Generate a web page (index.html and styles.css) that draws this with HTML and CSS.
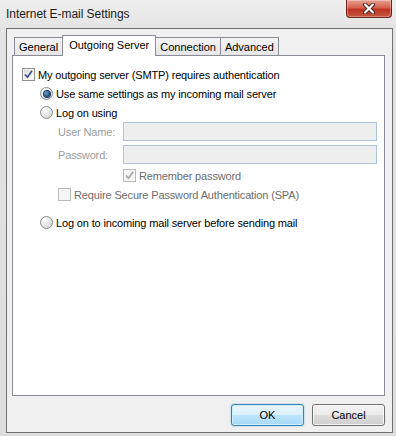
FILE: index.html
```html
<!DOCTYPE html>
<html>
<head>
  <title>Internet E-mail Settings</title>
  <link rel="stylesheet" href="styles.css">
</head>
<body>
  <div class="window">
    <div class="titlebar">
      <span class="title">Internet E-mail Settings</span>
      <div class="close">
        <svg width="16" height="11" viewBox="0 0 16 11">
          <path d="M4 1.5 L12 9.5 M12 1.5 L4 9.5" stroke="#4a2420" stroke-width="4" stroke-linecap="round"/>
          <path d="M4 1.5 L12 9.5 M12 1.5 L4 9.5" stroke="#ffffff" stroke-width="2.2" stroke-linecap="round"/>
        </svg>
      </div>
    </div>

    <div class="client">
      <div class="tabs">
        <div class="tab">General</div>
        <div class="tab active">Outgoing Server</div>
        <div class="tab">Connection</div>
        <div class="tab">Advanced</div>
      </div>

      <div class="panel">
        <div class="row">
          <span class="check">
            <svg width="9" height="9" viewBox="0 0 9 9"><path d="M1 4.5 L3.5 7.2 L8 0.8" fill="none" stroke="#3b4f8a" stroke-width="1.7"/></svg>
          </span>
          My outgoing server (SMTP) requires authentication
        </div>
        <div class="row level1">
          <span class="radio on"></span>
          Use same settings as my incoming mail server
        </div>
        <div class="row level1">
          <span class="radio"></span>
          Log on using
        </div>
        <div class="row level2 field">
          <span class="field-label">User Name:</span>
          <span class="text-input"></span>
        </div>
        <div class="row level2 field second">
          <span class="field-label">Password:</span>
          <span class="text-input"></span>
        </div>
        <div class="row level3 remember disabled">
          <span class="check off">
            <svg width="9" height="9" viewBox="0 0 9 9"><path d="M1 4.5 L3.5 7.2 L8 0.8" fill="none" stroke="#a3a3a3" stroke-width="1.5"/></svg>
          </span>
          Remember password
        </div>
        <div class="row level2 disabled">
          <span class="check off"></span>
          Require Secure Password Authentication (SPA)
        </div>
        <div class="row level1 last">
          <span class="radio"></span>
          Log on to incoming mail server before sending mail
        </div>
      </div>

      <div class="buttons">
        <button class="btn default">OK</button>
        <button class="btn">Cancel</button>
      </div>
    </div>
  </div>
</body>
</html>
```

FILE: styles.css
```css
body {
  margin: 0;
  font-family: "Liberation Sans", Arial, sans-serif;
  font-size: 11px;
  color: #000;
}
.window {
  width: 396px;
  height: 436px;
  overflow: hidden;
  background: linear-gradient(to bottom, #efefef 0, #e4e4e4 28px, #dddddd 100%);
}
.titlebar {
  height: 28px;
  display: flex;
  justify-content: space-between;
  align-items: flex-start;
  padding: 0 4px 0 6px;
}
.title {
  font-size: 12px;
  line-height: 29px;
  letter-spacing: -0.05px;
  color: #1a1a1a;
}
.close {
  width: 46px;
  height: 18px;
  box-sizing: border-box;
  border: 1px solid #6b211a;
  border-top: none;
  border-radius: 0 0 4px 4px;
  background: linear-gradient(#e9a293 0, #d5604b 45%, #bd3522 55%, #c8563f 100%);
  box-shadow: inset 0 0 0 1px rgba(255, 255, 255, 0.3);
  display: flex;
  align-items: center;
  justify-content: center;
}
.client {
  margin-left: 6px;
  width: 387px;
  height: 405px;
  box-sizing: border-box;
  border: 1px solid #707070;
  background: #f0f0f0;
  padding: 6px 7px 0 5px;
}
.tabs {
  display: flex;
  align-items: flex-end;
  height: 20px;
  margin-left: 2px;
  position: relative;
  z-index: 1;
}
.tab {
  height: 18px;
  box-sizing: border-box;
  border: 1px solid #898c95;
  border-bottom: none;
  margin-left: -1px;
  padding: 0 4px;
  line-height: 19px;
  background: linear-gradient(#f4f4f4, #e6e6e6);
}
.tab:first-child {
  margin-left: 0;
}
.tab.active {
  height: 21px;
  margin-bottom: -1px;
  padding: 0 6px;
  line-height: 19px;
  background: #fff;
}
.panel {
  width: 373px;
  height: 341px;
  box-sizing: border-box;
  border: 1px solid #898c95;
  background: #fff;
  padding: 9px 0 0 9px;
  letter-spacing: -0.15px;
}
.row {
  display: flex;
  align-items: center;
  height: 19px;
  white-space: nowrap;
}
.level1 {
  padding-left: 18px;
}
.level2 {
  padding-left: 36px;
}
.level3 {
  padding-left: 101px;
}
.second {
  margin-top: 4px;
}
.remember {
  margin-top: 2px;
}
.last {
  margin-top: 9px;
}
.disabled {
  color: #6d6d6d;
}
.field-label {
  width: 65px;
  color: #9d9d9d;
}
.text-input {
  width: 254px;
  height: 19px;
  box-sizing: border-box;
  border: 1px solid #aec3dc;
  background: #eeeeee;
}
.check {
  flex: none;
  width: 13px;
  height: 13px;
  box-sizing: border-box;
  margin-right: 3px;
  border: 1px solid #8e8f8f;
  background: linear-gradient(135deg, #d9d9d9, #fdfdfd);
  box-shadow: inset 0 0 0 1px #f6f6f6;
  display: flex;
  align-items: center;
  justify-content: center;
}
.check.off {
  border-color: #b9b9b9;
  background: #f4f4f4;
}
.radio {
  flex: none;
  width: 13px;
  height: 13px;
  box-sizing: border-box;
  margin-right: 3px;
  border: 1px solid #8c8e90;
  border-radius: 50%;
  background: radial-gradient(circle at 35% 30%, #ffffff, #d6d6d6 80%);
  display: flex;
  align-items: center;
  justify-content: center;
}
.radio.on::after {
  content: "";
  width: 6px;
  height: 6px;
  border-radius: 50%;
  background: radial-gradient(circle at 40% 40%, #6fb2e2, #0f2d52 70%);
  box-shadow: 0 0 0 1px #1b3e66;
}
.buttons {
  width: 373px;
  display: flex;
  justify-content: flex-end;
  gap: 8px;
  margin-top: 8px;
}
.btn {
  width: 73px;
  height: 22px;
  box-sizing: border-box;
  font-family: inherit;
  font-size: 11px;
  color: #000;
  border: 1px solid #707070;
  border-radius: 3px;
  background: linear-gradient(#f2f2f2 0, #ebebeb 50%, #dddddd 50%, #cfcfcf 100%);
  box-shadow: inset 0 0 0 1px rgba(255, 255, 255, 0.8);
  padding: 0;
}
.btn.default {
  border-color: #3c7fb1;
  background: linear-gradient(#eaf6fd 0, #d9f0fc 50%, #bee6fd 50%, #a7d9f5 100%);
  box-shadow: inset 0 0 0 1px #cfeefe, 0 0 2px #7ec3ea;
}
```
